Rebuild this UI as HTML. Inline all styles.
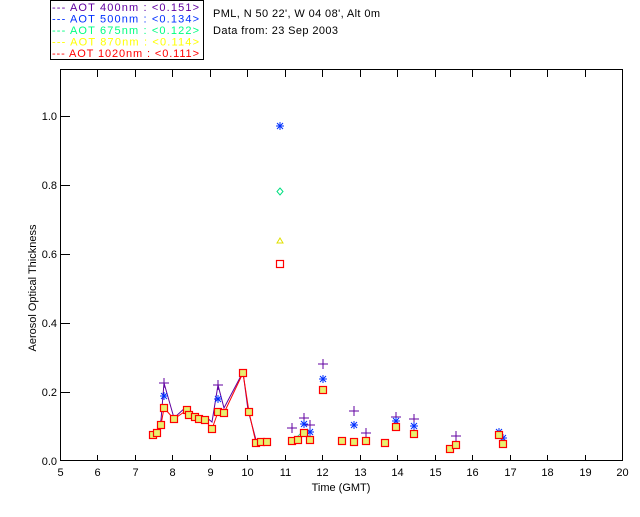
<!DOCTYPE html>
<html><head><style>
body{margin:0;background:#fff;width:640px;height:512px;overflow:hidden}
svg text{font-family:"Liberation Sans",sans-serif;font-size:11px}
</style></head><body>
<svg width="640" height="512" xmlns="http://www.w3.org/2000/svg">
<rect x="50.5" y="0.5" width="153" height="59" fill="#fff" stroke="#000"/>
<g font-size="11">
<text x="52" y="11" fill="#6000a0" textLength="147">---  AOT  400nm : &lt;0.151&gt;</text>
<text x="52" y="22.5" fill="#0030ff" textLength="147">---  AOT  500nm : &lt;0.134&gt;</text>
<text x="52" y="34" fill="#00ff80" textLength="147">---  AOT  675nm : &lt;0.122&gt;</text>
<text x="52" y="45.5" fill="#ffff00" textLength="147">---  AOT  870nm : &lt;0.114&gt;</text>
<text x="52" y="57" fill="#ff0000" textLength="147">---  AOT 1020nm : &lt;0.111&gt;</text>
<text x="213" y="17" textLength="167">PML, N 50 22', W 04 08', Alt 0m</text>
<text x="213" y="34" textLength="125">Data from: 23 Sep 2003</text>
</g>
<rect x="60.5" y="69.5" width="562" height="391" fill="none" stroke="#000"/>
<g stroke="#000">
<line x1="60" y1="116.5" x2="70" y2="116.5"/><line x1="60" y1="185.5" x2="70" y2="185.5"/>
<line x1="60" y1="254.5" x2="70" y2="254.5"/><line x1="60" y1="323.5" x2="70" y2="323.5"/>
<line x1="60" y1="392.5" x2="70" y2="392.5"/>
</g>
<g id="xt" stroke="#000"></g>
<g text-anchor="end"><text x="57" y="120">1.0</text><text x="57" y="189">0.8</text><text x="57" y="258">0.6</text><text x="57" y="327">0.4</text><text x="57" y="396">0.2</text><text x="57" y="465">0.0</text></g>
<text x="0" y="0" transform="translate(36,288) rotate(-90)" text-anchor="middle" font-size="10">Aerosol Optical Thickness</text>
<text x="341" y="491" text-anchor="middle">Time (GMT)</text>
<g id="xl" text-anchor="middle"></g>
<polyline fill="none" stroke="#6000a0" points="153,434 157,430 161,420 164,383 174,418 186,407 190,412 194,414 198,416 202,417 206,417 212,422 218,385 224,408 243,372 248,410 256,440 262,439 266,440"/>
<polyline fill="none" stroke="#ff0000" points="153,435 157,433 161,425 164,408 174,419 187,410 189,415 195,417 199,419 205,420 212,429 218,412 224,413 243,373 249,412 256,443 261,442 267,442"/>
<polyline fill="none" stroke="#00e080" stroke-width="0.8" points="292,438 298,436 304,430 310,438"/>
<polyline fill="none" stroke="#ff0000" points="292,441 298,440 304,433 310,440"/>
<g id="pts"></g>
</svg>
<script>
var ns="http://www.w3.org/2000/svg";
function el(p,t,a,txt){var e=document.createElementNS(ns,t);for(var k in a)e.setAttribute(k,a[k]);if(txt)e.textContent=txt;document.getElementById(p).appendChild(e);}
for(var h=5;h<=20;h++){var x=60+(h-5)*37.47;x=Math.round(x)+0.5;
if(h>5&&h<20){el('xt','line',{x1:x,y1:461,x2:x,y2:455});el('xt','line',{x1:x,y1:70,x2:x,y2:77});}
el('xl','text',{x:x,y:476},String(h));}
var red=[[153,435],[157,433],[161,425],[164,408],[174,419],[187,410],[189,415],[195,417],[199,419],[205,420],[212,429],[218,412],[224,413],[243,373],[249,412],[256,443],[261,442],[267,442],[292,441],[298,440],[304,433],[310,440],[323,390],[342,441],[354,442],[366,441],[385,443],[396,427],[414,434],[450,449],[456,445],[499,435],[503,444]];
var pur=[[164,383],[218,385],[292,428],[304,418],[310,425],[323,364],[354,411],[366,433],[396,417],[414,419],[456,436]];
var blu=[[164,396],[218,399],[304,424],[310,432],[323,379],[354,425],[396,421],[414,426],[280,126],[499,432],[503,438]];
pur.forEach(function(p){el('pts','path',{d:'M'+(p[0]-5)+' '+p[1]+'h10M'+p[0]+' '+(p[1]-5)+'v10',stroke:'#6000a0',fill:'none'});});
blu.forEach(function(p){el('pts','path',{d:'M'+(p[0]-4)+' '+p[1]+'h8M'+p[0]+' '+(p[1]-4)+'v8M'+(p[0]-3)+' '+(p[1]-3)+'l6 6M'+(p[0]+3)+' '+(p[1]-3)+'l-6 6',stroke:'#0030ff',fill:'none'});});
el('pts','path',{d:'M280 188l3 3.5-3 3.5-3-3.5z',stroke:'#00e080',fill:'none'});
el('pts','path',{d:'M280 238l3 5h-6z',stroke:'#e0e000',fill:'none'});
red.forEach(function(p){el('pts','rect',{x:p[0]-3.5,y:p[1]-3.5,width:7,height:7,fill:'#e8f070',stroke:'#ff0000','stroke-width':1.2});});
el('pts','rect',{x:276.5,y:260.5,width:7,height:7,fill:'#fff',stroke:'#ff0000','stroke-width':1.2});
</script>
</body></html>
